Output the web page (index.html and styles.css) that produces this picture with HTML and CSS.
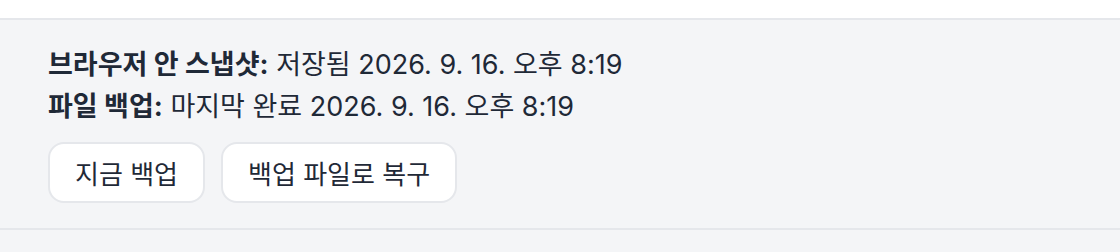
FILE: index.html
```html
<!DOCTYPE html>
<html lang="ko">
<head>
    <meta charset="UTF-8">
    <meta name="viewport" content="width=device-width, initial-scale=1.0">
    <title>백업 상태</title>
    <link rel="stylesheet" href="styles.css">
</head>
<body>
    <div class="top-strip"></div>

    <section class="backup-panel">
        <div class="status-line">
            <strong>브라우저 안 스냅샷:</strong> 저장됨 2026. 9. 16. 오후 8:19
        </div>
        <div class="status-line">
            <strong>파일 백업:</strong> 마지막 완료 2026. 9. 16. 오후 8:19
        </div>
        <div class="actions">
            <button id="backup-now">지금 백업</button>
            <button id="restore-file">백업 파일로 복구</button>
        </div>
    </section>

    <div class="bottom-strip"></div>
</body>
</html>
```

FILE: styles.css
```css
body {
    margin: 0;
    font-family: Inter, 'Noto Sans CJK KR', sans-serif;
    color: #1f2937;
    background-color: #f4f5f7;
}
.top-strip {
    height: 18px;
    background-color: white;
}
.backup-panel {
    border-top: 2px solid #e5e7eb;
    border-bottom: 2px solid #e5e7eb;
    padding: 24px 48px 25px 48px;
}
.status-line {
    font-size: 27px;
    line-height: 42px;
}
.status-line strong {
    font-weight: 700;
}
.actions {
    display: flex;
    gap: 16px;
    margin-top: 14px;
}
button {
    font-family: inherit;
    font-size: 26px;
    color: #1f2937;
    background-color: white;
    border: 2px solid #e5e7eb;
    border-radius: 16px;
    height: 61px;
    padding: 0 25px;
    cursor: pointer;
}
.bottom-strip {
    height: 22px;
}
```
